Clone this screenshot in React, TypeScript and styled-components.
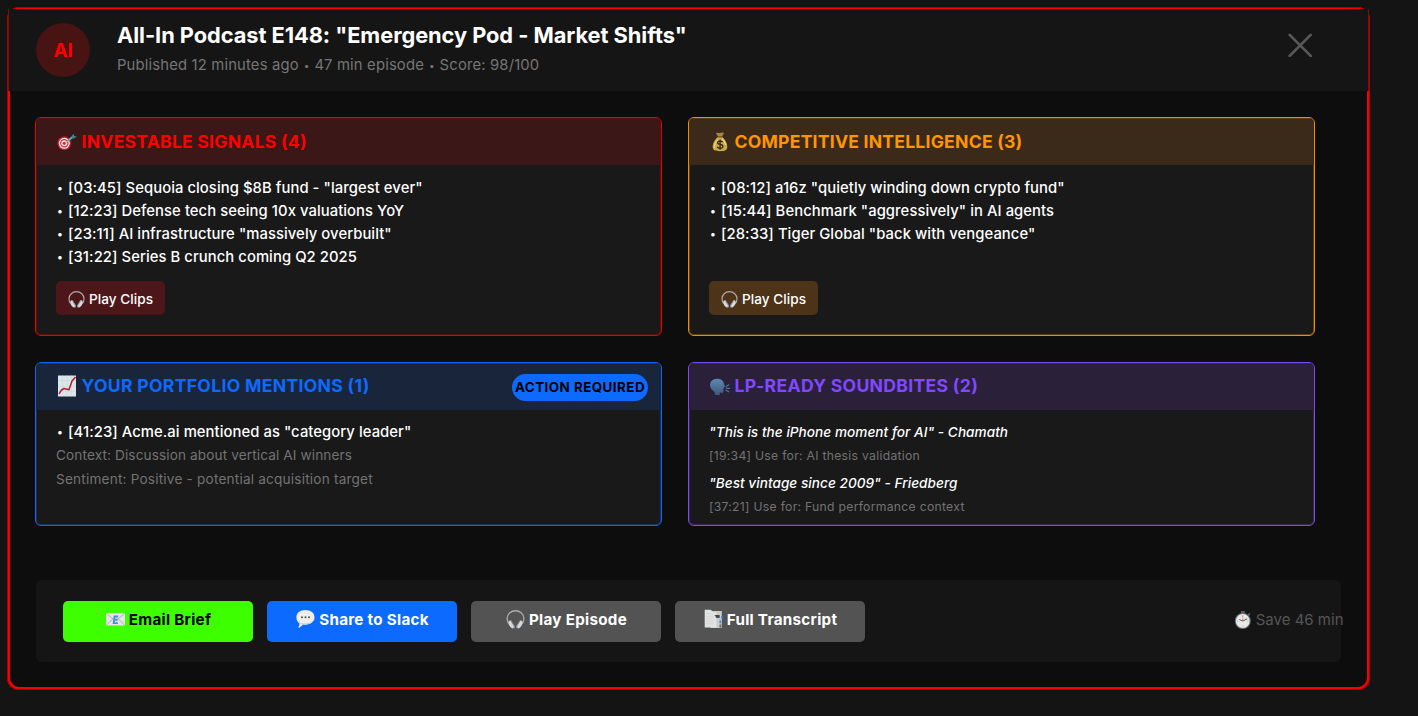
import React from "react";
import styled, { createGlobalStyle, css } from "styled-components";

const GlobalStyle = createGlobalStyle`
  * { box-sizing: border-box; }
  body {
    margin: 0;
    background: #141414;
    font-family: Inter, "Liberation Sans", sans-serif;
    color: #fff;
  }
`;

const Page = styled.main`
  width: 1418px;
  height: 716px;
  padding: 7px;
  overflow: hidden;
  background: #141414;
`;

const Modal = styled.section`
  width: 1363px;
  height: 683px;
  display: flex;
  flex-direction: column;
  padding: 2px 1px 0;
  border-radius: 12px;
  background: #0d0d0d;
  box-shadow: inset 0 0 0 1px #a00606, inset 0 0 0 3px #f90000;
`;

const Header = styled.header`
  height: 82px;
  flex: none;
  display: flex;
  align-items: flex-start;
  padding: 14px 57px 0 28px;
  background: #151515;
  box-shadow: inset 1px 0 0 #8a0808, inset -1px 0 0 #8a0808;
`;

const Avatar = styled.div`
  width: 54px;
  height: 54px;
  display: flex;
  align-items: center;
  justify-content: center;
  border-radius: 50%;
  background: #481313;
  color: #f00;
  font-size: 19px;
  font-weight: 700;
  letter-spacing: -0.2px;
`;

const Heading = styled.div`
  flex: 1;
  margin: -3px 0 0 27px;
`;

const Title = styled.h1`
  margin: 0;
  font-size: 21.8px;
  line-height: 30px;
  font-weight: 700;
  letter-spacing: -0.05px;
`;

const Subtitle = styled.p`
  margin: 0;
  font-size: 14.8px;
  line-height: 31px;
  letter-spacing: 0.17px;
  color: #767676;
`;

const Separator = styled.span`
  display: inline-block;
  width: 7px;
  text-align: center;
  font-size: 10px;
  vertical-align: 1px;
  line-height: 1;
`;

const CloseButton = styled.button`
  width: 24px;
  height: 24px;
  margin-top: 10px;
  padding: 0;
  border: 0;
  background: none;
  svg { display: block; }
`;

const Content = styled.div`
  flex: 1;
  display: flex;
  flex-direction: column;
  gap: 54px;
  padding: 26px 27px 0;
`;

const CardGrid = styled.div`
  display: grid;
  grid-template-columns: 627px 627px;
  grid-template-rows: 219px 164px;
  gap: 26px;
`;

const tones = {
  red: { line: "#e60000", soft: "#5a1010", text: "#ff0000", head: "#3b1717", button: "#4d1618" },
  orange: { line: "#f08e00", soft: "#5a3c12", text: "#ff9500", head: "#3b2a19", button: "#4d3318" },
  blue: { line: "#0d66f5", soft: "#173260", text: "#0d6aff", head: "#19253b", button: "#19335a" },
  purple: { line: "#7c48f5", soft: "#352850", text: "#8048ff", head: "#2a203a", button: "#33264f" },
};
type Tone = keyof typeof tones;

const Card = styled.article<{ $tone: Tone }>`
  display: flex;
  flex-direction: column;
  overflow: hidden;
  border: 1px solid ${(p) => tones[p.$tone].line};
  border-radius: 6px;
  background: #191919;
  box-shadow: inset 0 0 0 1px ${(p) => tones[p.$tone].soft};
`;

const CardHeader = styled.div<{ $tone: Tone; $lift?: number }>`
  height: 47px;
  flex: none;
  display: flex;
  align-items: center;
  padding: 0 13px ${(p) => p.$lift ?? 0}px 20px;
  background: ${(p) => tones[p.$tone].head};
  box-shadow: inset 0 1px 0 ${(p) => tones[p.$tone].soft};
  svg { flex: none; margin: 1px 5px 0 0.5px; }
`;

const CardTitle = styled.h2<{ $tone: Tone; $track: number }>`
  flex: 1;
  margin: 0;
  color: ${(p) => tones[p.$tone].text};
  font-size: 17.6px;
  line-height: 24px;
  font-weight: 700;
  letter-spacing: ${(p) => p.$track}px;
  white-space: nowrap;
`;

const Tag = styled.span`
  height: 27px;
  width: 136px;
  display: flex;
  align-items: center;
  justify-content: center;
  margin-top: 3px;
  padding-bottom: 1px;
  border-radius: 14px;
  background: #0d6aff;
  color: #000;
  font-size: 13.4px;
  font-weight: 700;
  letter-spacing: 0.46px;
  white-space: nowrap;
`;

const CardBody = styled.div<{ $top: number }>`
  padding: ${(p) => p.$top}px 20px 0;
`;

const SignalList = styled.ul<{ $rows: number }>`
  height: ${(p) => p.$rows * 23}px;
  margin: 0;
  padding: 0;
  list-style: none;
`;

const Signal = styled.li`
  display: flex;
  height: 23px;
  font-size: 14.8px;
  line-height: 25px;
  font-weight: 500;
  letter-spacing: 0.07px;
  white-space: nowrap;
  &::before {
    content: "•";
    width: 11px;
    padding-left: 1px;
    font-size: 11px;
  }
`;

const Note = styled.p<{ $track: number }>`
  margin: 0;
  color: #737373;
  font-size: 13.6px;
  line-height: 24px;
  letter-spacing: ${(p) => p.$track}px;
`;

const Soundbite = styled.figure`
  margin: 0 0 5px;
`;

const Quote = styled.blockquote`
  margin: 0;
  font-size: 13.6px;
  line-height: 23px;
  font-weight: 500;
  font-style: italic;
  letter-spacing: 0.04px;
`;

const QuoteUse = styled.figcaption`
  color: #737373;
  font-size: 12.2px;
  line-height: 23px;
  letter-spacing: 0.28px;
`;

const buttonBase = css`
  display: flex;
  align-items: center;
  justify-content: center;
  border: 0;
  padding: 0;
  border-radius: 5px;
  font-family: inherit;
  white-space: nowrap;
  svg { flex: none; }
`;

const ClipsButton = styled.button<{ $tone: Tone }>`
  ${buttonBase}
  width: 109px;
  height: 34px;
  margin-top: 13px;
  gap: 4px;
  padding-top: 2px;
  background: ${(p) => tones[p.$tone].button};
  color: #fff;
  font-size: 13.6px;
  font-weight: 500;
  letter-spacing: 0.06px;
`;

const Footer = styled.footer`
  width: 1305px;
  height: 82px;
  display: flex;
  align-items: center;
  gap: 14px;
  margin-left: 1px;
  padding: 0 0 0 27px;
  border-radius: 6px;
  background: #151515;
`;

const ActionButton = styled.button<{ $bg: string; $fg?: string }>`
  ${buttonBase}
  width: 190px;
  height: 41px;
  gap: 4px;
  padding: 0 0 4px 1px;
  background: ${(p) => p.$bg};
  color: ${(p) => p.$fg ?? "#fff"};
  font-size: 15.2px;
  font-weight: 700;
  letter-spacing: 0.29px;
`;

const Saved = styled.div`
  display: flex;
  align-items: center;
  gap: 4px;
  margin: 0 -2.5px 3px auto;
  color: #555;
  font-size: 15px;
  white-space: nowrap;
`;

const TargetIcon = () => (
  <svg width="20" height="20" viewBox="0 0 20 20">
    <circle cx="7.3" cy="11.3" r="7" fill="#c31629" />
    <circle cx="7.3" cy="11.3" r="5.5" fill="#f4eeee" />
    <circle cx="7.3" cy="11.3" r="4.2" fill="#b8303c" />
    <circle cx="7.3" cy="11.3" r="3" fill="#f4eeee" />
    <circle cx="7.3" cy="11.3" r="1.6" fill="#c22b38" />
    <path d="M8 11 15 5.5" stroke="#d9a46c" strokeWidth="1.5" />
    <path d="M10.5 9 16 4.8" stroke="#48b8c4" strokeWidth="1.6" />
    <path d="m14 5 2.6-3.3.6 2.3 2.8.5-3.6 2.2Z" fill="#318d98" />
  </svg>
);

const MoneyBagIcon = () => (
  <svg width="20" height="20" viewBox="0 0 20 20">
    <path d="M6 1c1.5-.6 2.5.3 4 0s2.6-.7 4 0l-2.2 4H8.2Z" fill="#a78546" />
    <path d="M7.7 5h4.6c2.7 2.2 5 6.3 5 9.8 0 3.2-1.8 4.4-7.3 4.4s-7.3-1.2-7.3-4.4c0-3.5 2.3-7.6 5-9.8Z" fill="#cda948" />
    <path d="M7.8 7.6C5.3 10 4.3 12.5 4.5 16M12 6.7c2 2 3.4 4.2 3.7 6.3" fill="none" stroke="#ead37e" strokeWidth="1.3" />
    <path d="M7.5 4.8h5" stroke="#71502a" strokeWidth="1.3" />
    <path d="M12.6 10.2c-.5-.8-1.3-1.2-2.5-1.2-3.4 0-3.2 3 0 3.4 3.8.4 3.6 3.9 0 3.9-1.5 0-2.5-.5-3-1.5M10.1 7.7v10" fill="none" stroke="#30281a" strokeWidth="1.3" />
  </svg>
);

const ChartIcon = () => (
  <svg width="20" height="22" viewBox="0 0 20 22">
    <rect x="1" y=".5" width="18" height="21" fill="#dce5ea" />
    <path d="M1 5.7h18M1 11h18M1 16.3h18M5.5.5v21M10 .5v21M14.5.5v21" stroke="#c8d3da" strokeWidth=".5" />
    <path d="M2 18.8 4.5 15l2.5-1.5 5 1.2L15 6l3.5-4" fill="none" stroke="#b51c30" strokeWidth="1.5" strokeLinejoin="round" />
  </svg>
);

const SpeakingIcon = () => (
  <svg width="20" height="20" viewBox="0 0 20 20">
    <defs>
      <linearGradient id="head" x1="0" y1="0" x2="0" y2="1">
        <stop offset="0" stopColor="#6089b0" />
        <stop offset="1" stopColor="#3b5a7b" />
      </linearGradient>
    </defs>
    <path d="M7.1 2.8c4 0 6.6 2.2 6.9 5.3l1.2 2.3-1.2.7.2 1.1-1.4.6.9 1-.6 2.7c-.8.7-2 .3-3.3 0V19H5.2c0-2.3-.8-3.4-2.6-4.7C-1.9 10.7-.5 2.8 7.1 2.8Z" fill="url(#head)" />
    <path d="m16 10.5 2.8-1.7M16.3 12.4h3.3M16 14.3l2.7 1.5" stroke="#4f7499" strokeWidth="1.2" strokeLinecap="round" />
  </svg>
);

const HeadphonesIcon = ({ size }: { size: number }) => (
  <svg width={size} height={size} viewBox="0 0 20 20">
    <path d="M3.2 14.8C1.6 12.9 1.2 11.2 1.2 9a8.8 8.2 0 0 1 17.6 0c0 2.2-.4 3.9-2 5.8" fill="none" stroke="#aaa" strokeWidth="1.4" />
    <path d="m3 11.5 2.2-.8 4 6.3-.3 2-2.2.5C3.5 17.5 2.2 14.5 3 11.5ZM17 11.5l-2.2-.8-4 6.3.3 2 2.2.5c3.2-2 4.5-5 3.7-8Z" fill="#d6d8db" />
    <path d="m5 11 3.7 6-.4 2.2M15 11l-3.7 6 .4 2.2" fill="none" stroke="#777b7f" strokeWidth="1" />
  </svg>
);

const EmailIcon = () => (
  <svg width="19" height="18" viewBox="0 0 19 18">
    <rect x="0" y="3" width="19" height="12.6" rx=".8" fill="#e4e6e7" />
    <path d="m.5 3.5 8 6.7q1 .8 2 0l8-6.7M.5 15.2l6.2-6.3m5.6 0 6.2 6.3" fill="none" stroke="#a0a6aa" strokeWidth=".8" />
    <path d="M12.2 6.5H8.5l-.8 6.6h4.2M8 9.8h3.5" fill="none" stroke="#4a90d9" strokeWidth="1.9" />
  </svg>
);

const SpeechIcon = () => (
  <svg width="19" height="20" viewBox="0 0 19 20">
    <path d="M9.4 1C14.8 1 18.5 4 18.5 8.3s-3.8 7.4-9 7.4c-1 0-1.9-.1-2.7-.3-.8 1.5-2.6 3-4.7 3.4.9-1.3 1.4-2.6 1.3-4.3C1.5 13 .4 10.9.4 8.3.4 4 4.2 1 9.4 1Z" fill="#eeeeec" />
    <path d="M2 12.7c2 2 5 2.4 8.5 2.200 4-.3 6.500-2 7.500-4.500" fill="none" stroke="#c5c6c8" strokeWidth=".9" />
    <circle cx="6" cy="8.3" r="1" fill="#555" />
    <circle cx="9.5" cy="8.3" r="1" fill="#555" />
    <circle cx="13" cy="8.3" r="1" fill="#555" />
  </svg>
);

const TabsIcon = () => (
  <svg width="19" height="20" viewBox="0 0 19 20">
    <path d="M6.5 2h11.3v17H6.5Z" fill="#c9cbcc" />
    <path d="M.7.7h6l2.5 2.2h3.3v15.5H.7Z" fill="#e1e2e2" />
    <path d="M2.3 4.8h5M2.3 7.3h7M2.3 9.8h7M2.3 12.3h7M2.3 14.8h7" stroke="#cfd0d1" strokeWidth=".7" />
    <path d="M10.5 6h5.2v3h-3.2Z" fill="#4a4a4a" />
    <path d="M17 7h1.5v2.5H17ZM15.5 11.2H17v3h-1.5Z" fill="#3c91ed" />
    <path d="M15.5 15.5h1.7v3h-1.7Z" fill="#666" />
  </svg>
);

const StopwatchIcon = () => (
  <svg width="18" height="20" viewBox="0 0 18 20">
    <path d="M7 1h3.8v3H7ZM13.5 4.5l1.7-1.6 1.3 1.2-1.6 1.8Z" fill="#53606a" />
    <circle cx="8.8" cy="11" r="8" fill="#66717a" />
    <circle cx="8.8" cy="11" r="6.9" fill="#e9e9e7" />
    <path d="M8.8 5.2v1.5M8.8 15.4v1.5M3 11h1.5M13.2 11h1.5" stroke="#aaa" strokeWidth=".7" />
    <path d="M8.8 11V5.5" stroke="#e39a86" strokeWidth=".9" />
    <path d="m5.3 9.5 3.5 1.5 4.4-2.2" fill="none" stroke="#555" strokeWidth="1" />
  </svg>
);

interface SignalCardProps {
  tone: Tone;
  icon: React.ReactNode;
  title: string;
  track: number;
  signals: string[];
}

const SignalCard = ({ tone, icon, title, track, signals }: SignalCardProps) => (
  <Card $tone={tone}>
    <CardHeader $tone={tone}>
      {icon}
      <CardTitle $tone={tone} $track={track}>{title}</CardTitle>
    </CardHeader>
    <CardBody $top={11}>
      <SignalList $rows={4}>
        {signals.map((s) => <Signal key={s}>{s}</Signal>)}
      </SignalList>
      <ClipsButton $tone={tone}>
        <HeadphonesIcon size={17} />
        Play Clips
      </ClipsButton>
    </CardBody>
  </Card>
);

export default function App() {
  return (
    <Page>
      <GlobalStyle />
      <Modal>
        <Header>
          <Avatar>AI</Avatar>
          <Heading>
            <Title>All-In Podcast E148: "Emergency Pod - Market Shifts"</Title>
            <Subtitle>
              Published 12 minutes ago <Separator>•</Separator> 47 min episode <Separator>•</Separator> Score: 98/100
            </Subtitle>
          </Heading>
          <CloseButton aria-label="Close">
            <svg width="24" height="24" viewBox="0 0 24 24">
              <path d="m1.700 1.900 21 21m0-21-21 21" stroke="#585858" strokeWidth="2.700" strokeLinecap="round" />
            </svg>
          </CloseButton>
        </Header>
        <Content>
          <CardGrid>
            <SignalCard
              tone="red"
              icon={<TargetIcon />}
              title="INVESTABLE SIGNALS (4)"
              track={0.22}
              signals={[
                '[03:45] Sequoia closing $8B fund - "largest ever"',
                "[12:23] Defense tech seeing 10x valuations YoY",
                '[23:11] AI infrastructure "massively overbuilt"',
                "[31:22] Series B crunch coming Q2 2025",
              ]}
            />
            <SignalCard
              tone="orange"
              icon={<MoneyBagIcon />}
              title="COMPETITIVE INTELLIGENCE (3)"
              track={0.22}
              signals={[
                '[08:12] a16z "quietly winding down crypto fund"',
                '[15:44] Benchmark "aggressively" in AI agents',
                '[28:33] Tiger Global "back with vengeance"',
              ]}
            />
            <Card $tone="blue">
              <CardHeader $tone="blue" $lift={2}>
                <ChartIcon />
                <CardTitle $tone="blue" $track={0.3}>YOUR PORTFOLIO MENTIONS (1)</CardTitle>
                <Tag>ACTION REQUIRED</Tag>
              </CardHeader>
              <CardBody $top={10}>
                <SignalList $rows={1}>
                  <Signal>[41:23] Acme.ai mentioned as "category leader"</Signal>
                </SignalList>
                <Note $track={0.12}>Context: Discussion about vertical AI winners</Note>
                <Note $track={0.2}>Sentiment: Positive - potential acquisition target</Note>
              </CardBody>
            </Card>
            <Card $tone="purple">
              <CardHeader $tone="purple" $lift={2}>
                <SpeakingIcon />
                <CardTitle $tone="purple" $track={0.3}>LP-READY SOUNDBITES (2)</CardTitle>
              </CardHeader>
              <CardBody $top={11}>
                <Soundbite>
                  <Quote>"This is the iPhone moment for AI" - Chamath</Quote>
                  <QuoteUse>[19:34] Use for: AI thesis validation</QuoteUse>
                </Soundbite>
                <Soundbite>
                  <Quote>"Best vintage since 2009" - Friedberg</Quote>
                  <QuoteUse>[37:21] Use for: Fund performance context</QuoteUse>
                </Soundbite>
              </CardBody>
            </Card>
          </CardGrid>
          <Footer>
            <ActionButton $bg="#3dff00" $fg="#000"><EmailIcon />Email Brief</ActionButton>
            <ActionButton $bg="#0d6aff"><SpeechIcon />Share to Slack</ActionButton>
            <ActionButton $bg="#535353"><HeadphonesIcon size={19} />Play Episode</ActionButton>
            <ActionButton $bg="#535353"><TabsIcon />Full Transcript</ActionButton>
            <Saved><StopwatchIcon />Save 46 min</Saved>
          </Footer>
        </Content>
      </Modal>
    </Page>
  );
}
